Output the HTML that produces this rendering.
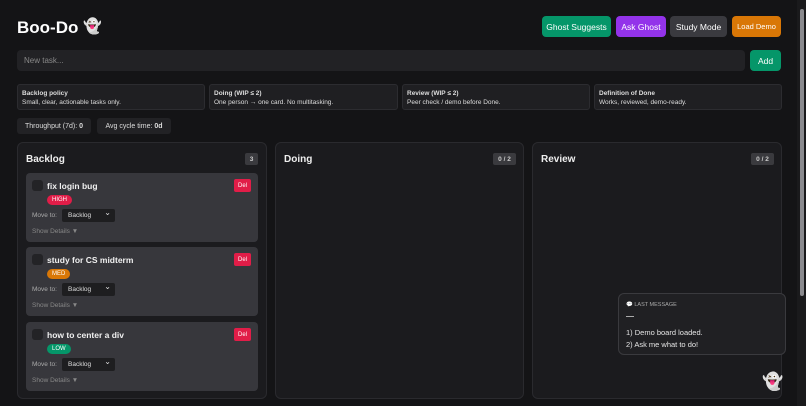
<!DOCTYPE html>
<html><head><meta charset="utf-8"><style>
*{box-sizing:border-box;margin:0;padding:0}
html,body{width:806px;height:406px;overflow:hidden;background:#141416;font-family:"Liberation Sans",sans-serif;color:#e8e8ea}
.a{position:absolute}
.btn{position:absolute;top:16px;height:21px;border-radius:4px;font-size:8.5px;color:#fff;display:flex;align-items:center;justify-content:center;white-space:nowrap}
.pol{position:absolute;top:84px;height:26px;background:#1f1f22;border:1px solid #2c2c30;border-radius:3px;padding:4px 4px;font-size:6.5px;line-height:9px;color:#ddd}
.pol b{display:block;font-size:6.5px}
.stat{position:absolute;top:118px;height:16px;background:#222225;border-radius:3px;font-size:7px;display:flex;align-items:center;justify-content:center;padding:0 4px;color:#ddd;white-space:nowrap}
.col{position:absolute;top:142px;height:257px;background:#1b1b1e;border:1px solid #2a2a2e;border-radius:6px}
.col h2{position:absolute;left:8px;top:11px;font-size:10px;font-weight:bold;color:#eee}
.cnt{position:absolute;top:10px;height:12px;background:#3a3a3e;border-radius:2px;font-size:6.5px;font-weight:bold;color:#ccc;display:flex;align-items:center;justify-content:center}
.card{position:absolute;left:8px;width:232px;height:69px;background:#37373c;border-radius:4px}
.cb{position:absolute;left:6px;top:7px;width:11px;height:11px;background:#232326;border-radius:3px}
.t{position:absolute;left:21px;top:8px;font-size:8.5px;font-weight:bold;color:#f0f0f0}
.del{position:absolute;left:208px;top:6px;width:17px;height:13px;background:#e11d48;border-radius:2px;font-size:6px;color:#fff;display:flex;align-items:center;justify-content:center}
.pr{position:absolute;left:21px;top:22px;height:10px;border-radius:5px;font-size:6px;color:#fff;display:flex;align-items:center;padding:0 5px}
.mv{position:absolute;left:6px;top:39px;font-size:6.5px;color:#aaa}
.sel{position:absolute;left:36px;top:36px;width:53px;height:13px;background:#1e1e20;border-radius:2px;font-size:6.5px;color:#ddd;padding:3px 6px}
.sel:after{content:"⌄";position:absolute;right:4px;top:-1px;font-size:8px}
.sd{position:absolute;left:6px;top:55px;font-size:6.5px;color:#888}
</style></head><body>
<div class="a" style="left:17px;top:18px;font-size:17px;font-weight:bold;color:#fff">Boo-Do</div>
<div class="a" style="left:83px;top:17px;font-size:15px">👻</div>
<div class="btn" style="left:542px;width:69px;background:#059669">Ghost Suggests</div>
<div class="btn" style="left:616px;width:50px;background:#9333ea">Ask Ghost</div>
<div class="btn" style="left:670px;width:57px;background:#3a3a3f">Study Mode</div>
<div class="btn" style="left:732px;width:49px;background:#d97706;font-size:7.5px">Load Demo</div>
<div class="a" style="left:17px;top:50px;width:728px;height:21px;background:#222225;border-radius:4px;font-size:8px;color:#888;padding:6px 7px">New task...</div>
<div class="btn" style="left:750px;top:50px;width:31px;background:#059669">Add</div>
<div class="pol" style="left:17px;width:188px"><b>Backlog policy</b>Small, clear, actionable tasks only.</div>
<div class="pol" style="left:209px;width:189px"><b>Doing (WIP ≤ 2)</b>One person → one card. No multitasking.</div>
<div class="pol" style="left:402px;width:188px"><b>Review (WIP ≤ 2)</b>Peer check / demo before Done.</div>
<div class="pol" style="left:594px;width:188px"><b>Definition of Done</b>Works, reviewed, demo-ready.</div>
<div class="stat" style="left:17px;width:74px">Throughput (7d):&nbsp;<b>0</b></div>
<div class="stat" style="left:97px;width:74px">Avg cycle time:&nbsp;<b>0d</b></div>
<div class="col" style="left:17px;width:250px"><h2>Backlog</h2><div class="cnt" style="left:227px;width:13px">3</div>
<div class="card" style="top:30px"><div class="cb"></div><div class="t">fix login bug</div><div class="del">Del</div><div class="pr" style="background:#e11d48">HIGH</div><div class="mv">Move to:</div><div class="sel">Backlog</div><div class="sd">Show Details ▼</div></div>
<div class="card" style="top:104px"><div class="cb"></div><div class="t">study for CS midterm</div><div class="del">Del</div><div class="pr" style="background:#d97706">MED</div><div class="mv">Move to:</div><div class="sel">Backlog</div><div class="sd">Show Details ▼</div></div>
<div class="card" style="top:179px"><div class="cb"></div><div class="t">how to center a div</div><div class="del">Del</div><div class="pr" style="background:#059669">LOW</div><div class="mv">Move to:</div><div class="sel">Backlog</div><div class="sd">Show Details ▼</div></div>
</div>
<div class="col" style="left:275px;width:249px"><h2>Doing</h2><div class="cnt" style="left:217px;width:23px">0 / 2</div></div>
<div class="col" style="left:532px;width:250px"><h2>Review</h2><div class="cnt" style="left:218px;width:23px">0 / 2</div></div>
<div class="a" style="left:618px;top:293px;width:168px;height:62px;background:#202023;border:1px solid #3a3a3e;border-radius:6px">
<div class="a" style="left:7px;top:8px;font-size:5.5px;color:#aaa">💬 LAST MESSAGE</div>
<div class="a" style="left:7px;top:22px;width:8px;height:1px;background:#aaa"></div>
<div class="a" style="left:7px;top:33px;font-size:7.5px;line-height:12px;color:#e5e5e5">1) Demo board loaded.<br>2) Ask me what to do!</div></div>
<div class="a" style="left:762px;top:372px;font-size:17px">👻</div>
<div class="a" style="left:797px;top:0;width:9px;height:406px;background:#1a1a1c"></div>
<div class="a" style="left:800px;top:9px;width:4px;height:287px;background:#8a8a8e;border-radius:2px"></div>
</body></html>
